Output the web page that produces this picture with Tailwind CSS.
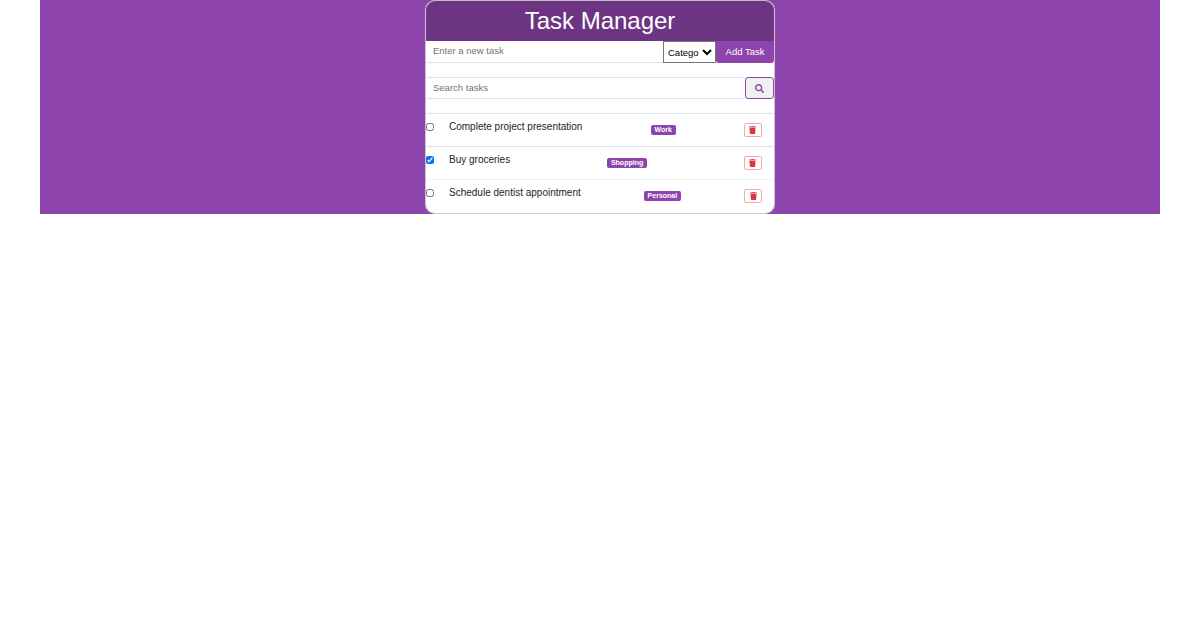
<!DOCTYPE html>
<html lang="en">
<head>
    <meta charset="UTF-8">
    <meta name="viewport" content="width=device-width, initial-scale=1.0">
    <title>Task Manager</title>
    <script src="https://cdn.jsdelivr.net/npm/@tailwindcss/browser@4"></script>
</head>
<body class="bg-white font-['Liberation_Sans',Arial,sans-serif]">
    <div class="mx-10 h-[214px] bg-[#8e44ad] flex justify-center">
        <div class="w-[350px] h-[214px] bg-white rounded-[10px] border border-[#c9c9c9] border-t-[#bdbdbd] overflow-hidden flex flex-col">
            <!-- Header -->
            <div class="h-10 bg-[#6c3483] text-white text-[24px] leading-10 text-center">Task Manager</div>

            <!-- New task form -->
            <div class="flex h-[22px]">
                <input type="text" placeholder="Enter a new task" class="flex-1 min-w-0 px-[7px] text-[9.5px] text-[#495057] placeholder:text-[#6c757d] border-b border-[#dee2e6] outline-none">
                <select class="w-[53px] text-[9.5px] text-black bg-white border border-[#767676]">
                    <option>Category</option>
                </select>
                <button class="w-[58px] bg-[#8e44ad] text-white text-[9.5px] rounded-b-[3px]">Add Task</button>
            </div>

            <!-- Search -->
            <div class="flex h-[22px] mt-[14px]">
                <input type="text" placeholder="Search tasks" class="flex-1 min-w-0 px-[7px] text-[9.5px] text-[#495057] placeholder:text-[#6c757d] border-y border-[#dee2e6] outline-none">
                <button class="w-[29px] flex items-center justify-center bg-[#f0f0f0] border border-[#8e44ad] rounded-[3px]">
                    <svg class="w-[9px] h-[9px]" viewBox="0 0 512 512" fill="#8e44ad"><path d="M505 442.700L405.300 343c-4.500-4.500-10.600-7-17-7H372c27.600-35.300 44-79.700 44-128C416 93.100 322.900 0 208 0S0 93.100 0 208s93.100 208 208 208c48.300 0 92.700-16.400 128-44v16.300c0 6.400 2.500 12.500 7 17l99.700 99.700c9.400 9.400 24.600 9.400 33.900 0l28.300-28.300c9.400-9.400 9.400-24.600.1-34zM208 336c-70.700 0-128-57.200-128-128 0-70.700 57.200-128 128-128 70.700 0 128 57.200 128 128 0 70.700-57.200 128-128 128z"/></svg>
                </button>
            </div>

            <!-- Task list -->
            <ul class="mt-[14px] border-t border-[#dee2e6] text-[10px] text-[#212529]">
                <li class="flex h-[33px] border-b border-[#dee2e6]">
                    <input type="checkbox" class="w-2 h-2 mt-[9px] accent-[#0d6efd]">
                    <div class="flex-1 flex justify-between pl-[15px] pr-[12px]">
                        <span class="mt-[7px] leading-3">Complete project presentation</span>
                        <span class="mt-[11px] h-[10px] px-[4px] rounded-[2px] bg-[#8e44ad] text-white text-[7px] leading-[10px] font-bold">Work</span>
                        <button class="mt-[9px] w-[18px] h-[14px] flex items-center justify-center border border-[#eea9af] rounded-[2px]">
                            <svg class="w-[7px] h-[8px]" viewBox="0 0 448 512" fill="#dc3545"><path d="M432 32H312l-9.400-18.700A24 24 0 0 0 281.100 0H166.800a23.700 23.700 0 0 0-21.400 13.300L136 32H16A16 16 0 0 0 0 48v32a16 16 0 0 0 16 16h416a16 16 0 0 0 16-16V48a16 16 0 0 0-16-16zM53.200 467a48 48 0 0 0 47.900 45h245.800a48 48 0 0 0 47.900-45L416 128H32z"/></svg>
                        </button>
                    </div>
                </li>
                <li class="flex h-[33px] border-b border-[#f2f2f2]">
                    <input type="checkbox" checked class="w-2 h-2 mt-[9px] accent-[#0d6efd]">
                    <div class="flex-1 flex justify-between pl-[15px] pr-[12px]">
                        <span class="mt-[7px] leading-3">Buy groceries</span>
                        <span class="mt-[11px] h-[10px] px-[4px] rounded-[2px] bg-[#8e44ad] text-white text-[7px] leading-[10px] font-bold">Shopping</span>
                        <button class="mt-[9px] w-[18px] h-[14px] flex items-center justify-center border border-[#eea9af] rounded-[2px]">
                            <svg class="w-[7px] h-[8px]" viewBox="0 0 448 512" fill="#dc3545"><path d="M432 32H312l-9.400-18.700A24 24 0 0 0 281.100 0H166.800a23.700 23.700 0 0 0-21.400 13.300L136 32H16A16 16 0 0 0 0 48v32a16 16 0 0 0 16 16h416a16 16 0 0 0 16-16V48a16 16 0 0 0-16-16zM53.200 467a48 48 0 0 0 47.900 45h245.800a48 48 0 0 0 47.900-45L416 128H32z"/></svg>
                        </button>
                    </div>
                </li>
                <li class="flex h-[33px]">
                    <input type="checkbox" class="w-2 h-2 mt-[9px] accent-[#0d6efd]">
                    <div class="flex-1 flex justify-between pl-[15px] pr-[12px]">
                        <span class="mt-[7px] leading-3">Schedule dentist appointment</span>
                        <span class="mt-[11px] h-[10px] px-[4px] rounded-[2px] bg-[#8e44ad] text-white text-[7px] leading-[10px] font-bold">Personal</span>
                        <button class="mt-[9px] w-[18px] h-[14px] flex items-center justify-center border border-[#eea9af] rounded-[2px]">
                            <svg class="w-[7px] h-[8px]" viewBox="0 0 448 512" fill="#dc3545"><path d="M432 32H312l-9.400-18.700A24 24 0 0 0 281.100 0H166.800a23.700 23.700 0 0 0-21.400 13.300L136 32H16A16 16 0 0 0 0 48v32a16 16 0 0 0 16 16h416a16 16 0 0 0 16-16V48a16 16 0 0 0-16-16zM53.200 467a48 48 0 0 0 47.900 45h245.800a48 48 0 0 0 47.900-45L416 128H32z"/></svg>
                        </button>
                    </div>
                </li>
            </ul>
        </div>
    </div>
</body>
</html>
